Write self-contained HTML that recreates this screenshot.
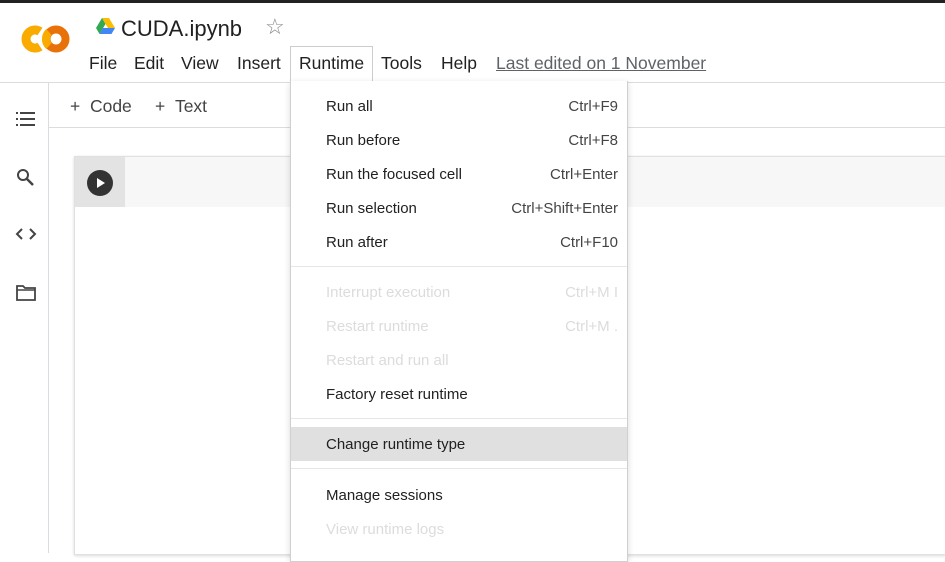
<!DOCTYPE html>
<html><head><style>
body{margin:0;width:945px;height:553px;overflow:hidden;background:#fff;font-family:"Liberation Sans",Arial,sans-serif;position:relative}
.a{position:absolute}
.mi{position:absolute;left:326px;font-size:15px;color:#212121;line-height:20px}
.sc{position:absolute;right:327px;font-size:15px;color:#444;line-height:20px;text-align:right}
.dis{color:#dcdcdc}
.nav{position:absolute;top:53px;font-size:17.5px;color:#212121}
</style></head><body>
<div class="a" style="left:0;top:0;width:945px;height:3px;background:#222"></div>
<svg class="a" style="left:18px;top:23px" width="52" height="32" viewBox="0 0 52 32">
<path d="M22 8.5 A9 9 0 1 0 22 23.5" stroke="#f9ab00" stroke-width="9" fill="none"/>
<circle cx="38" cy="16" r="9.5" stroke="#e8710a" stroke-width="8" fill="none"/>
<path d="M31 9 A9.5 9.5 0 0 0 31 23" stroke="#f9ab00" stroke-width="8" fill="none"/>
</svg>
<svg class="a" style="left:96px;top:18px" width="19" height="17" viewBox="0 0 19 17">
<path d="M6 0h7l6 10h-7z" fill="#fbbc04"/><path d="M6 0l-6 10 3.5 6 6-10z" fill="#34a853"/><path d="M3.5 16h12l3.5-6h-12z" fill="#4285f4"/>
</svg>
<div class="a" style="left:121px;top:16px;font-size:22px;color:#212121">CUDA.ipynb</div>
<div class="a" style="left:265px;top:14px;font-size:22px;color:#888">☆</div>
<div class="nav" style="left:89px">File</div>
<div class="nav" style="left:134px">Edit</div>
<div class="nav" style="left:181px">View</div>
<div class="nav" style="left:237px">Insert</div>
<div class="nav" style="left:381px">Tools</div>
<div class="nav" style="left:441px">Help</div>
<div class="nav" style="left:496px;color:#5f6368;text-decoration:underline">Last edited on 1 November</div>
<div class="a" style="left:0;top:82px;width:945px;height:1px;background:#dadce0"></div>
<div class="a" style="left:48px;top:83px;width:1px;height:470px;background:#dadce0"></div>
<div class="a" style="left:49px;top:127px;width:896px;height:1px;background:#dadce0"></div>
<svg class="a" style="left:16px;top:111px" width="20" height="16" viewBox="0 0 20 16" fill="#444"><rect x="0" y="1" width="2" height="2"/><rect x="4" y="1" width="15" height="2"/><rect x="0" y="7" width="2" height="2"/><rect x="4" y="7" width="15" height="2"/><rect x="0" y="13" width="2" height="2"/><rect x="4" y="13" width="15" height="2"/></svg>
<svg class="a" style="left:16px;top:168px" width="20" height="20" viewBox="0 0 20 20"><circle cx="7" cy="7" r="5" stroke="#444" stroke-width="2" fill="none"/><path d="M11 11l6 6" stroke="#444" stroke-width="2.5"/></svg>
<svg class="a" style="left:15px;top:226px" width="22" height="16" viewBox="0 0 22 16"><path d="M7 3l-5 5 5 5M15 3l5 5-5 5" stroke="#444" stroke-width="2" fill="none"/></svg>
<svg class="a" style="left:16px;top:284px" width="20" height="17" viewBox="0 0 20 17"><path d="M1 2h6l2 2h10v12H1z" stroke="#444" stroke-width="1.8" fill="none"/><path d="M1 6h18" stroke="#444" stroke-width="1.5"/></svg>
<div class="a" style="left:70px;top:96px;font-size:17.5px;color:#444">+ &nbsp;Code</div>
<div class="a" style="left:155px;top:96px;font-size:17.5px;color:#444">+ &nbsp;Text</div>
<div class="a" style="left:74px;top:156px;width:871px;height:397px;border:1px solid #e0e0e0;border-right:none;box-shadow:0 1px 3px rgba(0,0,0,.15)"></div>
<div class="a" style="left:75px;top:157px;width:870px;height:50px;background:#f7f7f7"></div>
<div class="a" style="left:75px;top:157px;width:50px;height:50px;background:#e3e3e3"></div>
<svg class="a" style="left:87px;top:170px" width="26" height="26" viewBox="0 0 26 26"><circle cx="13" cy="13" r="13" fill="#333"/><path d="M10 8l8 5-8 5z" fill="#fff"/></svg>
<div class="a" style="left:290px;top:46px;width:81px;height:36px;border:1px solid #ccc;border-bottom:none;background:#fff"></div>
<div class="nav" style="left:299px">Runtime</div>
<div class="a" style="left:290px;top:81px;width:336px;height:480px;background:#fff;border:1px solid #d0d0d0;border-top:none;box-shadow:0 2px 6px rgba(0,0,0,.15)"></div>
<div class="a" style="left:291px;top:266px;width:336px;height:1px;background:#e6e6e6"></div>
<div class="a" style="left:291px;top:418px;width:336px;height:1px;background:#e6e6e6"></div>
<div class="a" style="left:291px;top:427px;width:336px;height:34px;background:#e0e0e0"></div>
<div class="a" style="left:291px;top:468px;width:336px;height:1px;background:#e6e6e6"></div>
<div class="mi" style="top:97px">Run all</div><div class="sc" style="top:97px">Ctrl+F9</div>
<div class="mi" style="top:131px">Run before</div><div class="sc" style="top:131px">Ctrl+F8</div>
<div class="mi" style="top:165px">Run the focused cell</div><div class="sc" style="top:165px">Ctrl+Enter</div>
<div class="mi" style="top:199px">Run selection</div><div class="sc" style="top:199px">Ctrl+Shift+Enter</div>
<div class="mi" style="top:233px">Run after</div><div class="sc" style="top:233px">Ctrl+F10</div>
<div class="mi dis" style="top:283px">Interrupt execution</div><div class="sc dis" style="top:283px">Ctrl+M I</div>
<div class="mi dis" style="top:317px">Restart runtime</div><div class="sc dis" style="top:317px">Ctrl+M .</div>
<div class="mi dis" style="top:351px">Restart and run all</div>
<div class="mi" style="top:385px">Factory reset runtime</div>
<div class="mi" style="top:435px">Change runtime type</div>
<div class="mi" style="top:486px">Manage sessions</div>
<div class="mi dis" style="top:520px">View runtime logs</div>
</body></html>
